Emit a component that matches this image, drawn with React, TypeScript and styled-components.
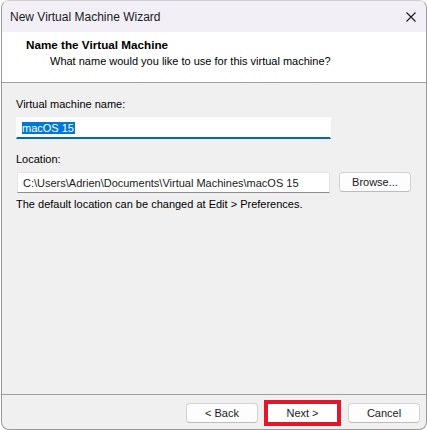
import React from 'react';
import styled, { createGlobalStyle } from 'styled-components';

const GlobalStyle = createGlobalStyle`
  *, *::before, *::after {
    box-sizing: border-box;
  }
  html, body {
    margin: 0;
    padding: 0;
    background: #ffffff;
  }
  body {
    font-family: "Liberation Sans", Arial, sans-serif;
    font-size: 11px;
    color: #000;
  }
`;

const Window = styled.div`
  margin-left: 1px;
  width: 426px;
  height: 430px;
  border: 1px solid #9a9a9a;
  border-top-color: #d0d0d0;
  border-radius: 8px;
  overflow: hidden;
  display: flex;
  flex-direction: column;
  background: #f0f0f0;
`;

const TitleBar = styled.div`
  height: 31px;
  flex-shrink: 0;
  background: #f3eff7;
  display: flex;
  align-items: center;
  justify-content: space-between;
  padding-left: 8px;
`;

const Title = styled.span`
  font-size: 12px;
  color: #1a1a1a;
`;

const CloseButton = styled.div`
  width: 30px;
  height: 30px;
  display: flex;
  align-items: center;
  justify-content: center;
`;

const Header = styled.div`
  height: 51px;
  flex-shrink: 0;
  background: #ffffff;
  border-bottom: 1px solid #a0a0a0;
  padding: 5px 0 0 24px;
`;

const HeaderTitle = styled.div`
  font-weight: bold;
  font-size: 11.7px;
  line-height: 16px;
`;

const HeaderSub = styled.div`
  padding-left: 24px;
  line-height: 16px;
`;

const Body = styled.div`
  flex: 1;
  padding: 13px 14px 0 14px;
  display: flex;
  flex-direction: column;
`;

const Label = styled.div<{ $top?: number }>`
  line-height: 16px;
  margin-top: ${(p) => p.$top ?? 0}px;
`;

const Row = styled.div`
  display: flex;
  align-items: flex-start;
  gap: 9px;
  margin-top: 5px;
`;

const Field = styled.div<{ $focused?: boolean }>`
  width: ${(p) => (p.$focused ? 315 : 313)}px;
  height: ${(p) => (p.$focused ? 22 : 21)}px;
  margin-left: ${(p) => (p.$focused ? 0 : 1)}px;
  background: #ffffff;
  border: 1px solid ${(p) => (p.$focused ? '#ffffff' : '#e6e6e6')};
  border-bottom: ${(p) => (p.$focused ? '2px solid #0067c0' : '1px solid #8c8c8c')};
  display: flex;
  align-items: center;
  padding-left: 5px;
  white-space: nowrap;
  overflow: hidden;
  color: #1a1a1a;
`;

const NameField = styled(Field)`
  margin-top: 5px;
`;

const Selected = styled.span`
  background: #0078d7;
  color: #ffffff;
  line-height: 12px;
  height: 12px;
  padding-right: 1px;
`;

const Hint = styled.div`
  margin-top: 3px;
  line-height: 16px;
`;

const Footer = styled.div`
  height: 35px;
  flex-shrink: 0;
  border-top: 1px solid #a0a0a0;
  display: flex;
  justify-content: flex-end;
  align-items: flex-start;
  padding: 8px 6px 0 0;
`;

const Button = styled.div<{ $gap?: number }>`
  width: 72px;
  height: 20px;
  margin-left: ${(p) => p.$gap ?? 0}px;
  background: #fdfdfd;
  border: 1px solid #d3d3d3;
  border-bottom-color: #bcbcbc;
  border-radius: 4px;
  display: flex;
  align-items: center;
  justify-content: center;
  color: #1a1a1a;
`;

const BrowseButton = styled(Button)`
  margin-top: 0;
`;

const Highlight = styled.div`
  margin: -3px 0 0 6px;
  width: 77px;
  height: 26px;
  border: 4px solid #e3162b;
  display: flex;
`;

const NextButton = styled.div`
  flex: 1;
  background: #ffffff;
  display: flex;
  align-items: center;
  justify-content: center;
  color: #1a1a1a;
`;

const App = () => {
  return (
    <>
      <GlobalStyle />
      <Window>
        <TitleBar>
          <Title>New Virtual Machine Wizard</Title>
          <CloseButton>
            <svg width="10" height="10" viewBox="0 0 10 10">
              <path d="M0.5 0.5 L9.5 9.5 M9.5 0.5 L0.5 9.5" stroke="#1a1a1a" strokeWidth="1.1" />
            </svg>
          </CloseButton>
        </TitleBar>
        <Header>
          <HeaderTitle>Name the Virtual Machine</HeaderTitle>
          <HeaderSub>What name would you like to use for this virtual machine?</HeaderSub>
        </Header>
        <Body>
          <Label>Virtual machine name:</Label>
          <NameField $focused>
            <Selected>macOS 15</Selected>
          </NameField>
          <Label $top={12}>Location:</Label>
          <Row>
            <Field>C:\Users\Adrien\Documents\Virtual Machines\macOS 15</Field>
            <BrowseButton>Browse...</BrowseButton>
          </Row>
          <Hint>The default location can be changed at Edit &gt; Preferences.</Hint>
        </Body>
        <Footer>
          <Button>&lt; Back</Button>
          <Highlight>
            <NextButton>Next &gt;</NextButton>
          </Highlight>
          <Button $gap={7}>Cancel</Button>
        </Footer>
      </Window>
    </>
  );
};

export default App;
